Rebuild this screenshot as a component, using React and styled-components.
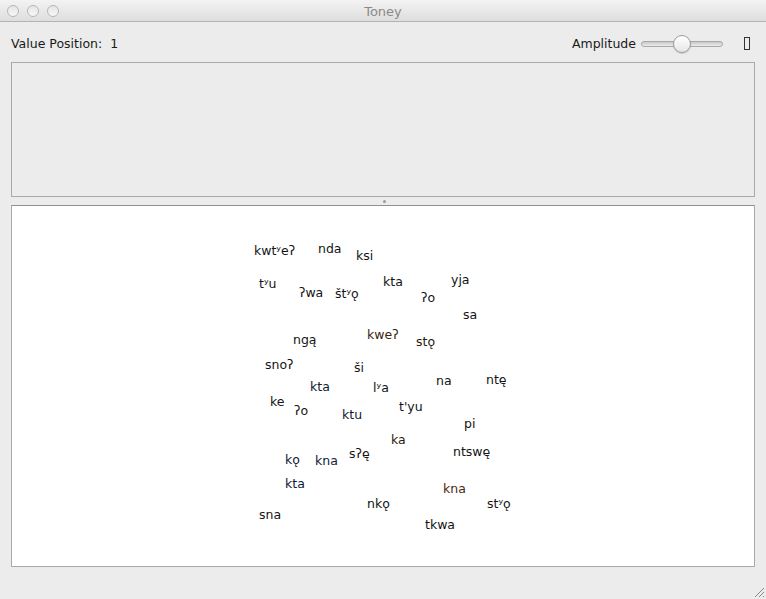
import React from "react";
import styled, { createGlobalStyle } from "styled-components";

const GlobalStyle = createGlobalStyle`
  html, body { margin: 0; padding: 0; background: #ececec; }
  body { font-family: "DejaVu Sans", "Liberation Sans", sans-serif; }
`;

const Window = styled.div`
  width: 766px;
  height: 599px;
  display: flex;
  flex-direction: column;
  background: #ececec;
  position: relative;
  overflow: hidden;
`;

const TitleBar = styled.div`
  height: 22px;
  box-sizing: border-box;
  border-bottom: 1px solid #b3b3b3;
  background: linear-gradient(#f3f3f3, #dedede);
  display: grid;
  grid-template-columns: 1fr auto 1fr;
  align-items: center;
`;

const Lights = styled.div`
  display: flex;
  gap: 8px;
  padding-left: 7px;
`;

const Light = styled.span`
  width: 12px;
  height: 12px;
  border-radius: 50%;
  box-sizing: border-box;
  border: 1px solid #b6b6b6;
  background: linear-gradient(#e6e6e6, #f7f7f7);
`;

const Title = styled.div`
  font-size: 13px;
  color: #8a8a8a;
  padding-top: 1px;
`;

const Toolbar = styled.div`
  height: 40px;
  box-sizing: border-box;
  padding: 3px 16px 0 11px;
  display: flex;
  align-items: center;
  justify-content: space-between;
  font-size: 12.5px;
  color: #1a1a1a;
`;

const Label = styled.span`
  white-space: pre;
`;

const RightGroup = styled.div`
  display: flex;
  align-items: center;
`;

const Slider = styled.div`
  position: relative;
  width: 82px;
  height: 18px;
  margin-left: 5px;
  display: flex;
  align-items: center;
`;

const Track = styled.div`
  width: 100%;
  height: 4px;
  border-radius: 3px;
  border: 1px solid #a9a9a9;
  background: linear-gradient(#c8c8c8, #ececec);
`;

const Knob = styled.div`
  position: absolute;
  left: 32px;
  top: 0;
  width: 18px;
  height: 18px;
  box-sizing: border-box;
  border-radius: 50%;
  border: 1px solid #9c9c9c;
  background: linear-gradient(#ffffff, #e6e6e6);
  box-shadow: 0 1px 1px rgba(0, 0, 0, 0.15);
`;

const GlyphBox = styled.div`
  width: 4px;
  height: 11px;
  border: 1px solid #333;
  margin-left: 21px;
`;

const Content = styled.div`
  display: flex;
  flex-direction: column;
  padding: 0 11px;
`;

const TopPanel = styled.div`
  height: 135px;
  box-sizing: border-box;
  border: 1px solid #a9a9a9;
  background: #ececec;
`;

const Splitter = styled.div`
  height: 8px;
  display: flex;
  justify-content: center;
  align-items: center;
`;

const Dimple = styled.div`
  width: 3px;
  height: 3px;
  border-radius: 50%;
  background: #9a9a9a;
  margin-left: 2px;
`;

const Canvas = styled.div`
  position: relative;
  height: 362px;
  box-sizing: border-box;
  border: 1px solid #a9a9a9;
  border-top-color: #8f8f8f;
  background: #ffffff;
`;

const Word = styled.span`
  position: absolute;
  font-size: 12.5px;
  line-height: 16px;
  white-space: nowrap;
  color: ${(p) => p.$c || "#141414"};
`;

const Grip = styled.svg`
  position: absolute;
  right: 1px;
  bottom: 1px;
`;

const words = [
  ["kwtʸeʔ", 254, 250],
  ["nda", 318, 248],
  ["ksi", 356, 255],
  ["tʸu", 259, 283],
  ["ʔwa", 299, 292],
  ["štʸǫ", 335, 293],
  ["kta", 383, 281],
  ["ʔo", 421, 297],
  ["yja", 451, 279],
  ["sa", 463, 314],
  ["ngą", 293, 339],
  ["kweʔ", 367, 334, "#3a2410"],
  ["stǫ", 416, 341, "#2a1a10"],
  ["snoʔ", 265, 364],
  ["ši", 354, 367],
  ["kta", 310, 386, "#101c30"],
  ["lʸa", 373, 387],
  ["na", 436, 380],
  ["ntę", 486, 379],
  ["ke", 270, 401],
  ["ʔo", 294, 410],
  ["ktu", 342, 414, "#101c30"],
  ["t'yu", 399, 406],
  ["pi", 464, 423],
  ["ka", 391, 439, "#2a1a10"],
  ["kǫ", 285, 459, "#0e1a3a"],
  ["kna", 315, 460, "#0e1a3a"],
  ["sʔę", 349, 453],
  ["ntswę", 453, 451],
  ["kta", 285, 483, "#0e1a3a"],
  ["kna", 443, 488, "#4a2a10"],
  ["stʸǫ", 487, 503],
  ["sna", 259, 514],
  ["nkǫ", 367, 503],
  ["tkwa", 425, 524],
];

export default function App() {
  return (
    <>
      <GlobalStyle />
      <Window>
        <TitleBar>
          <Lights>
            <Light />
            <Light />
            <Light />
          </Lights>
          <Title>Toney</Title>
          <div />
        </TitleBar>
        <Toolbar>
          <Label>Value Position:  1</Label>
          <RightGroup>
            <Label>Amplitude</Label>
            <Slider>
              <Track />
              <Knob />
            </Slider>
            <GlyphBox />
          </RightGroup>
        </Toolbar>
        <Content>
          <TopPanel />
          <Splitter>
            <Dimple />
          </Splitter>
          <Canvas>
            {words.map(([t, x, y, c], i) => (
              <Word key={i} $c={c} style={{ left: x - 12, top: y - 206 - 7 }}>
                {t}
              </Word>
            ))}
          </Canvas>
        </Content>
        <Grip width="12" height="12" viewBox="0 0 12 12">
          <path d="M11 2 L2 11 M11 6 L6 11 M11 10 L10 11" stroke="#8a8a8a" strokeWidth="1" fill="none" />
        </Grip>
      </Window>
    </>
  );
}
